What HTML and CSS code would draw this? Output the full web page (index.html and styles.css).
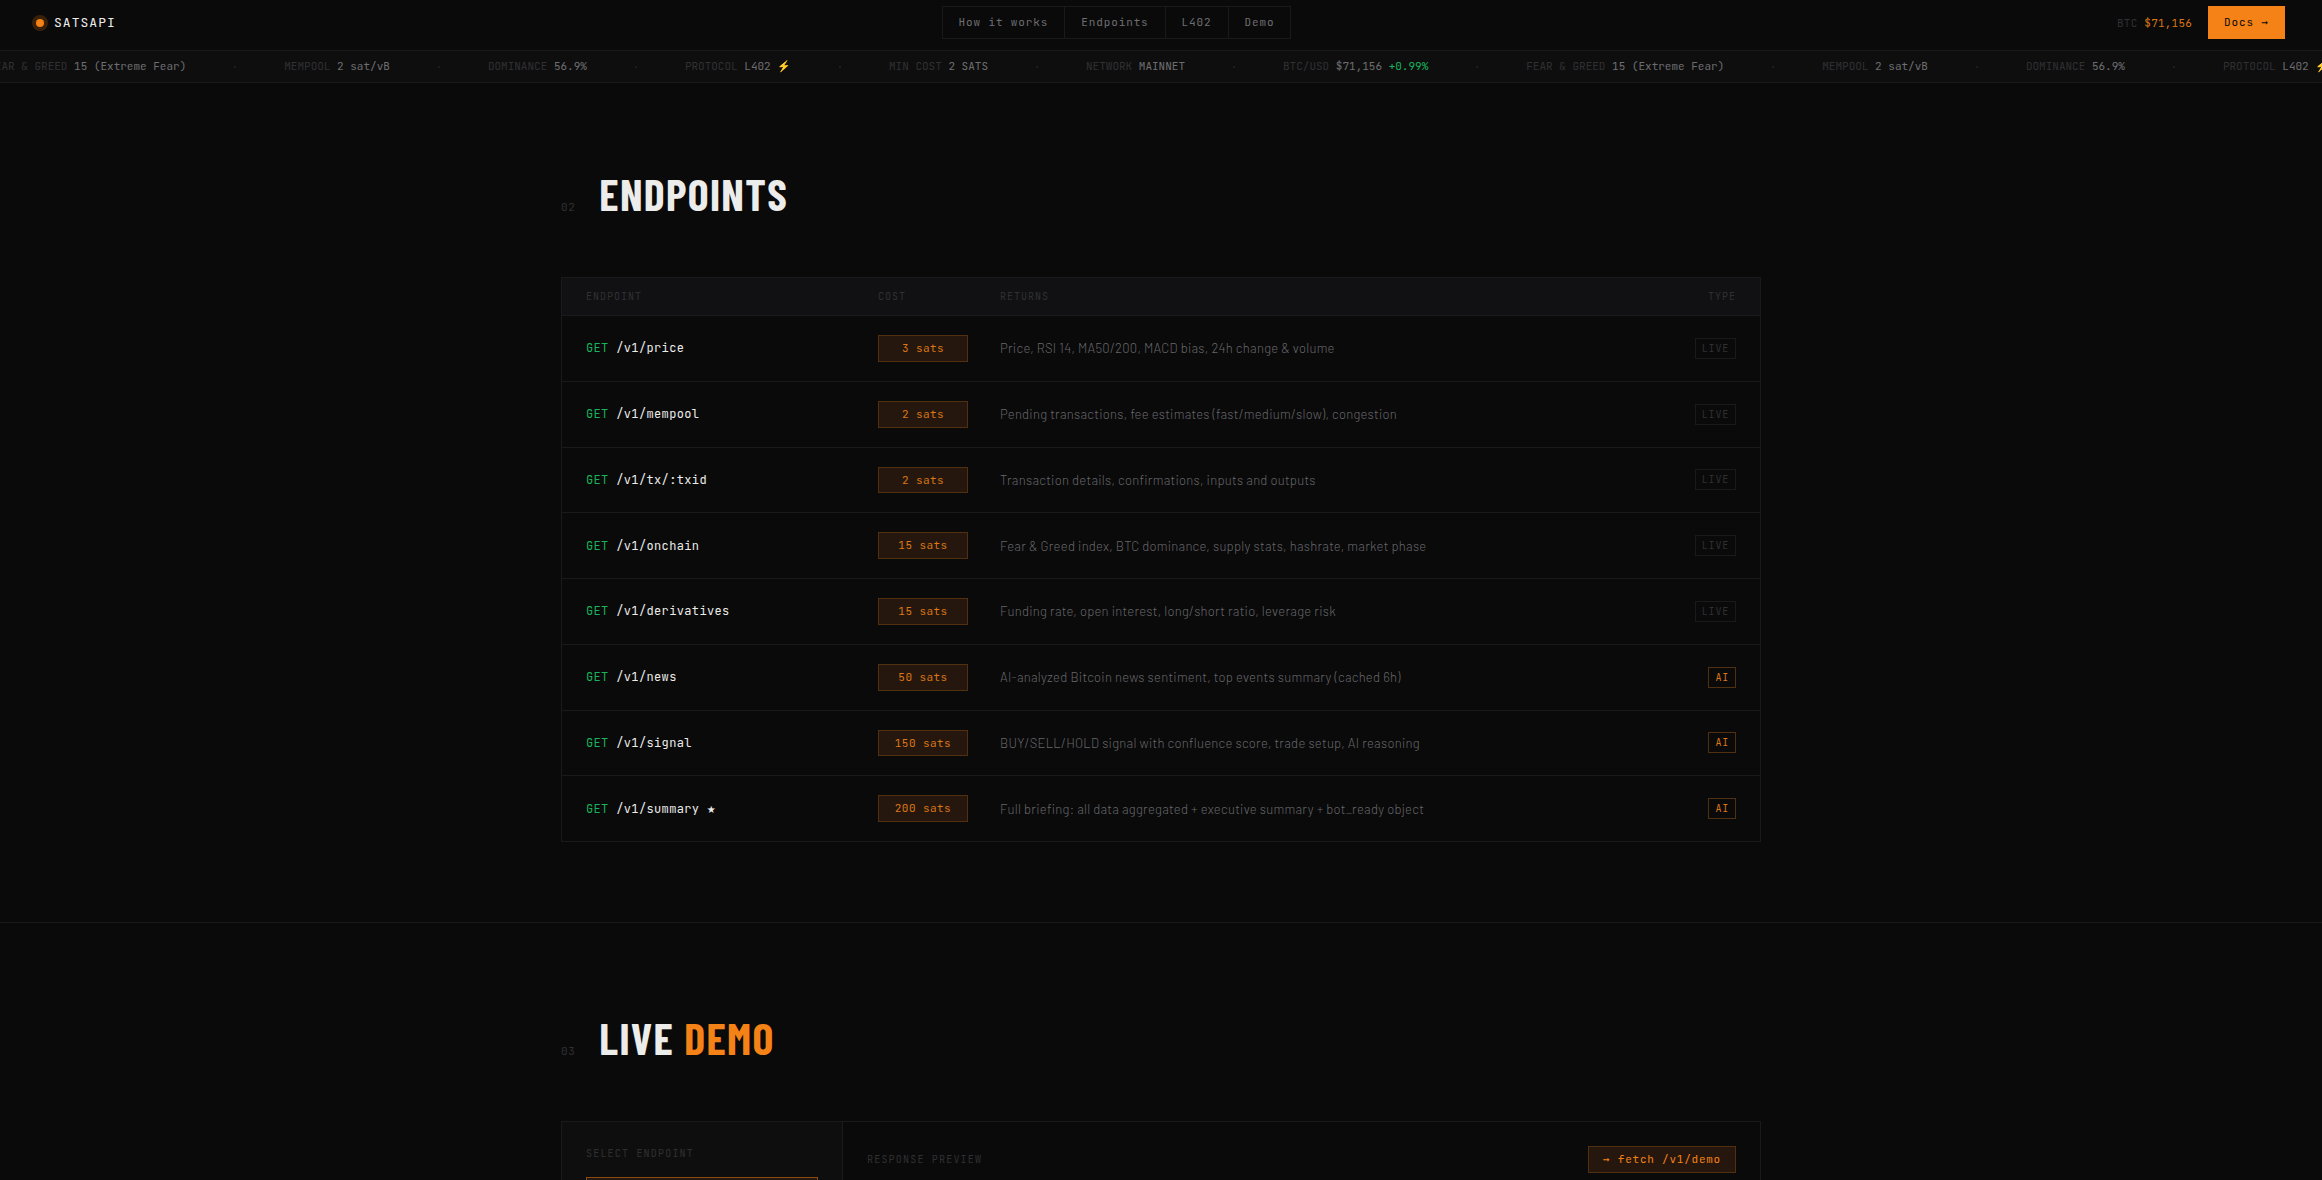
FILE: index.html
```html
<!DOCTYPE html>
<html lang="en">
<head>
  <meta charset="UTF-8">
  <meta name="viewport" content="width=device-width, initial-scale=1.0">
  <title>SATSAPI</title>
  <link rel="stylesheet" href="styles.css">
</head>
<body>

<nav class="nav">
  <a href="#" class="logo"><span class="logo-dot"></span>SATSAPI</a>
  <div class="nav-links">
    <a href="#how">How it works</a>
    <a href="#endpoints">Endpoints</a>
    <a href="#l402">L402</a>
    <a href="#demo">Demo</a>
  </div>
  <div class="nav-right">
    <span class="nav-price">BTC <b>$71,156</b></span>
    <a href="#docs" class="btn-docs">Docs <span class="glyph">→</span></a>
  </div>
</nav>

<div class="ticker">
  <div class="ticker-track" id="ticker"></div>
</div>

<main>
  <section class="section" id="endpoints">
    <div class="container">
      <div class="section-head">
        <span class="section-num">02</span>
        <h2>ENDPOINTS</h2>
      </div>
      <table class="endpoints">
        <colgroup>
          <col class="col-endpoint">
          <col class="col-cost">
          <col>
          <col class="col-type">
        </colgroup>
        <thead>
          <tr><th>ENDPOINT</th><th>COST</th><th>RETURNS</th><th>TYPE</th></tr>
        </thead>
        <tbody>
          <tr>
            <td class="path"><span class="method">GET</span> /v1/price</td>
            <td><span class="cost">3 sats</span></td>
            <td class="desc">Price, RSI 14, MA50/200, MACD bias, 24h change &amp; volume</td>
            <td><span class="tag">LIVE</span></td>
          </tr>
          <tr>
            <td class="path"><span class="method">GET</span> /v1/mempool</td>
            <td><span class="cost">2 sats</span></td>
            <td class="desc">Pending transactions, fee estimates (fast/medium/slow), congestion</td>
            <td><span class="tag">LIVE</span></td>
          </tr>
          <tr>
            <td class="path"><span class="method">GET</span> /v1/tx/:txid</td>
            <td><span class="cost">2 sats</span></td>
            <td class="desc">Transaction details, confirmations, inputs and outputs</td>
            <td><span class="tag">LIVE</span></td>
          </tr>
          <tr>
            <td class="path"><span class="method">GET</span> /v1/onchain</td>
            <td><span class="cost">15 sats</span></td>
            <td class="desc">Fear &amp; Greed index, BTC dominance, supply stats, hashrate, market phase</td>
            <td><span class="tag">LIVE</span></td>
          </tr>
          <tr>
            <td class="path"><span class="method">GET</span> /v1/derivatives</td>
            <td><span class="cost">15 sats</span></td>
            <td class="desc">Funding rate, open interest, long/short ratio, leverage risk</td>
            <td><span class="tag">LIVE</span></td>
          </tr>
          <tr>
            <td class="path"><span class="method">GET</span> /v1/news</td>
            <td><span class="cost">50 sats</span></td>
            <td class="desc">AI-analyzed Bitcoin news sentiment, top events summary (cached 6h)</td>
            <td><span class="tag tag-ai">AI</span></td>
          </tr>
          <tr>
            <td class="path"><span class="method">GET</span> /v1/signal</td>
            <td><span class="cost">150 sats</span></td>
            <td class="desc">BUY/SELL/HOLD signal with confluence score, trade setup, AI reasoning</td>
            <td><span class="tag tag-ai">AI</span></td>
          </tr>
          <tr>
            <td class="path"><span class="method">GET</span> /v1/summary <span class="glyph star">★</span></td>
            <td><span class="cost">200 sats</span></td>
            <td class="desc">Full briefing: all data aggregated + executive summary + bot_ready object</td>
            <td><span class="tag tag-ai">AI</span></td>
          </tr>
        </tbody>
      </table>
    </div>
  </section>

  <section class="section" id="demo">
    <div class="container">
      <div class="section-head">
        <span class="section-num">03</span>
        <h2>LIVE <em>DEMO</em></h2>
      </div>
      <div class="demo">
        <div class="demo-side">
          <div class="label">SELECT ENDPOINT</div>
          <button class="demo-option active"></button>
        </div>
        <div class="demo-main">
          <div class="label">RESPONSE PREVIEW</div>
          <button class="btn-fetch"><span class="glyph">→</span> fetch /v1/demo</button>
        </div>
      </div>
    </div>
  </section>
</main>

<script>
  const items = [
    ["BTC/USD", '$71,156 <i class="up">+0.99%</i>'],
    ["FEAR &amp; GREED", "15 (Extreme Fear)"],
    ["MEMPOOL", "2 sat/vB"],
    ["DOMINANCE", "56.9%"],
    ["PROTOCOL", 'L402 <i class="bolt">⚡</i>'],
    ["MIN COST", "2 SATS"],
    ["NETWORK", "MAINNET"]
  ];

  let html = "";
  items.concat(items).forEach(item => {
    html += `<span class="tick">${item[0]} <b>${item[1]}</b></span><span class="sep"></span>`;
  });
  document.getElementById("ticker").innerHTML = html;
</script>

</body>
</html>
```
FILE: styles.css
```css
:root {
  --bg: #0a0a0a;
  --bg-2: #0e0e0e;
  --bg-3: #111113;
  --line: #1a1a1b;
  --white: #ececea;
  --muted: #6e6e72;
  --dim: #303033;
  --orange: #f58216;
  --green: #18b45c;
  --mono: "JetBrains Mono", "DejaVu Sans Mono", monospace;
  --sans: Barlow, Roboto, sans-serif;
}
* {
  box-sizing: border-box;
  margin: 0;
  padding: 0;
}
body {
  height: 100vh;
  overflow: hidden;
  background: var(--bg);
  color: var(--white);
  font-family: var(--mono);
  font-size: 11px;
}
a {
  color: inherit;
  text-decoration: none;
}
button {
  font: inherit;
}
.glyph {
  font-family: "DejaVu Sans Mono", monospace;
}

/* nav */
.nav {
  display: flex;
  justify-content: space-between;
  align-items: center;
  padding: 6px 37px 11px 36px;
  border-bottom: 1px solid var(--line);
}
.logo {
  display: flex;
  align-items: center;
  gap: 10px;
  font-size: 13px;
  letter-spacing: 0.08em;
}
.logo-dot {
  width: 8px;
  height: 8px;
  border-radius: 50%;
  background: var(--orange);
  box-shadow: 0 0 0 4px #38200b;
}
.nav-links {
  display: flex;
  border: 1px solid var(--line);
  color: var(--muted);
  letter-spacing: 0.08em;
}
.nav-links a {
  padding: 0 16px;
  line-height: 31px;
}
.nav-links a + a {
  border-left: 1px solid var(--line);
}
.nav-right {
  display: flex;
  align-items: center;
  gap: 16px;
}
.nav-price {
  color: var(--dim);
  letter-spacing: 0.02em;
}
.nav-price b {
  color: #d97516;
  font-weight: normal;
}
.btn-docs {
  padding: 0 16px;
  background: var(--orange);
  color: var(--bg);
  line-height: 33px;
  letter-spacing: 0.08em;
}

/* ticker */
.ticker {
  overflow: hidden;
  background: var(--bg-2);
  border-bottom: 1px solid var(--line);
  line-height: 31px;
}
.ticker-track {
  display: flex;
  align-items: center;
  gap: 48px;
  height: 31px;
  margin-left: -255px;
  white-space: nowrap;
}
.tick {
  flex: none;
  color: var(--dim);
}
.tick b {
  color: var(--muted);
  font-weight: normal;
}
.up {
  color: var(--green);
  font-style: normal;
}
.bolt {
  font-family: "Noto Color Emoji", sans-serif;
  font-style: normal;
  line-height: 1;
}
.sep {
  flex: none;
  width: 2px;
  height: 2px;
  background: #1c1c1e;
}

/* sections */
.section {
  padding: 80px 40px;
  border-bottom: 1px solid var(--line);
}
.section:first-child {
  padding-top: 76px;
}
.container {
  max-width: 1200px;
  margin: 0 auto;
}
.section-head {
  display: flex;
  align-items: baseline;
  gap: 24px;
  margin-bottom: 48px;
}
.section-num {
  color: var(--dim);
  letter-spacing: 0.05em;
}
h2 {
  font-family: "Barlow Condensed", "DejaVu Sans Condensed", sans-serif;
  font-size: 44px;
  font-weight: 700;
  line-height: 70px;
  letter-spacing: 0.03em;
}
h2 em {
  color: var(--orange);
  font-style: normal;
}

/* endpoints table */
.endpoints {
  width: 100%;
  table-layout: fixed;
  border-spacing: 0;
  border: 1px solid var(--line);
}
.col-endpoint {
  width: 316px;
}
.col-cost {
  width: 122px;
}
.col-type {
  width: 112px;
}
.endpoints th {
  height: 38px;
  background: var(--bg-3);
  border-bottom: 1px solid var(--line);
  color: var(--dim);
  font-size: 10px;
  font-weight: normal;
  letter-spacing: 0.1em;
  text-align: left;
}
.endpoints td {
  padding: 19px 0;
  border-bottom: 1px solid var(--line);
  vertical-align: middle;
}
.endpoints th:first-child,
.endpoints td:first-child {
  padding-left: 24px;
}
.endpoints th:last-child,
.endpoints td:last-child {
  padding-right: 24px;
  text-align: right;
}
.endpoints tbody tr:last-child td {
  border-bottom: none;
}
.path {
  font-size: 12px;
  letter-spacing: 0.03em;
}
.method {
  color: var(--green);
}
.star {
  font-size: 14px;
  line-height: 1;
}
.cost {
  display: block;
  width: 90px;
  background: #25170d;
  border: 1px solid #50300f;
  color: #dc7717;
  line-height: 2.25;
  letter-spacing: 0.04em;
  text-align: center;
}
.desc {
  color: #67676b;
  font-family: var(--sans);
  font-size: 13px;
  font-weight: 300;
  line-height: 24px;
  letter-spacing: 0.02em;
}
.tag {
  display: inline-block;
  padding: 0 6px;
  border: 1px solid var(--line);
  color: var(--dim);
  font-size: 10px;
  line-height: 19px;
  letter-spacing: 0.08em;
}
.tag-ai {
  border-color: #50300f;
  color: #dc7717;
}

/* demo */
.demo {
  display: grid;
  grid-template-columns: 281px 1fr;
  min-height: 420px;
  border: 1px solid var(--line);
}
.demo-side {
  padding: 24px;
  background: var(--bg-2);
  border-right: 1px solid var(--line);
}
.label {
  color: var(--dim);
  font-size: 10px;
  line-height: 15px;
  letter-spacing: 0.12em;
}
.demo-option {
  display: block;
  width: 100%;
  height: 40px;
  margin-top: 16px;
  background: #25170d;
  border: 1px solid #50300f;
}
.demo-option.active {
  border-color: #8a4b12;
}
.demo-main {
  display: flex;
  justify-content: space-between;
  align-items: center;
  align-self: start;
  padding: 24px;
}
.btn-fetch {
  padding: 0 14px;
  background: #25170d;
  border: 1px solid #50300f;
  color: var(--orange);
  line-height: 25px;
  letter-spacing: 0.07em;
}
```
